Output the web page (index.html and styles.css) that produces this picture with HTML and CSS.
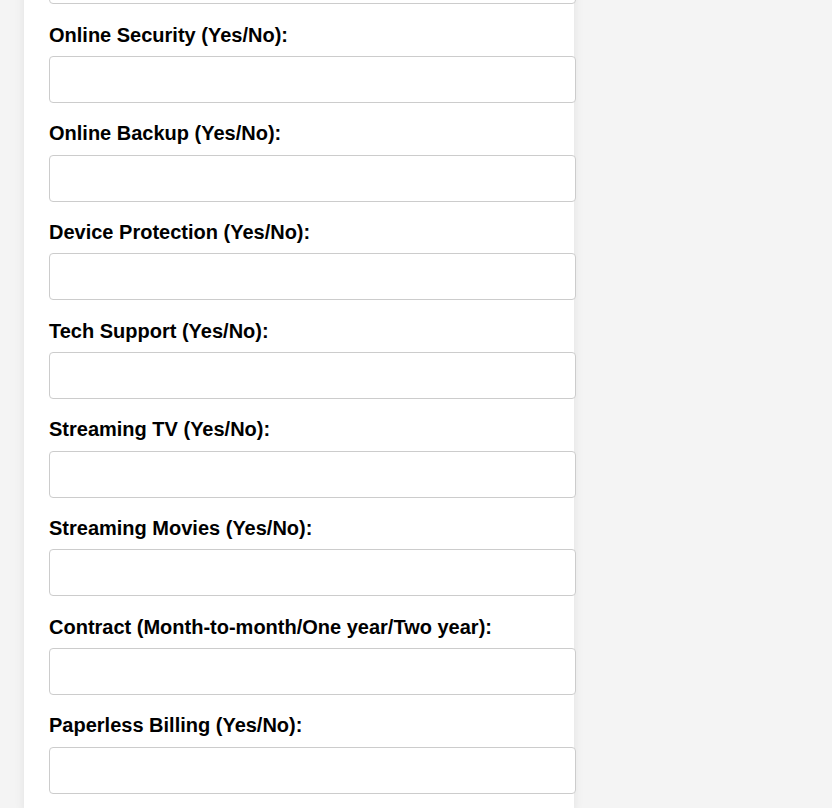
FILE: index.html
```html
<!DOCTYPE html>
<html lang="en">
<head>
<meta charset="utf-8">
<title>Customer Churn Form</title>
<link rel="stylesheet" href="styles.css">
</head>
<body>
<div class="card">
  <form class="form">
    <input class="field" type="text">
    <label class="label">Online Security (Yes/No):</label>
    <input class="field" type="text">
    <label class="label">Online Backup (Yes/No):</label>
    <input class="field" type="text">
    <label class="label">Device Protection (Yes/No):</label>
    <input class="field" type="text">
    <label class="label">Tech Support (Yes/No):</label>
    <input class="field" type="text">
    <label class="label">Streaming TV (Yes/No):</label>
    <input class="field" type="text">
    <label class="label">Streaming Movies (Yes/No):</label>
    <input class="field" type="text">
    <label class="label">Contract (Month-to-month/One year/Two year):</label>
    <input class="field" type="text">
    <label class="label">Paperless Billing (Yes/No):</label>
    <input class="field" type="text">
  </form>
</div>
</body>
</html>
```
FILE: styles.css
```css
html, body {
  margin: 0;
  padding: 0;
  height: 100%;
  overflow: hidden;
}
body {
  background: #f4f4f4;
  font-family: "Liberation Sans", Arial, sans-serif;
}
.card {
  width: 500px;
  margin-left: 24px;
  padding: 0 25px;
  background: #fff;
  box-shadow: 0 0 10px rgba(0, 0, 0, 0.08);
  min-height: 100%;
}
.form {
  display: flex;
  flex-direction: column;
  margin-top: -42.7px;
}
.label {
  display: block;
  font-weight: bold;
  font-size: 20px;
  line-height: 23px;
  color: #000;
  margin-bottom: 9.5px;
}
.field {
  display: block;
  box-sizing: border-box;
  width: 527px;
  height: 47px;
  padding: 12px;
  border: 1px solid #ccc;
  border-radius: 4px;
  background: #fff;
  font-size: 16px;
  margin: 0 0 19.2px 0;
  flex: none;
}
```
